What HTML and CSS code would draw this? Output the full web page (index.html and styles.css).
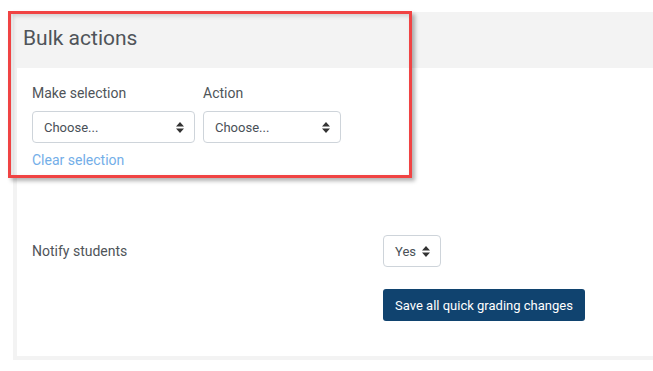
FILE: index.html
```html
<!DOCTYPE html>
<html lang="en">
<head>
    <meta charset="UTF-8">
    <title>Bulk actions</title>
    <link rel="stylesheet" href="styles.css">
</head>
<body>
    <div class="panel">
        <!-- Header band -->
        <div class="panel-header">
            <h2>Bulk actions</h2>
        </div>

        <div class="panel-body">
            <div class="bulk-row">
                <div class="field field-selection">
                    <label>Make selection</label>
                    <div class="select">
                        <span>Choose...</span>
                        <svg class="caret" width="8" height="11" viewBox="0 0 8 11"><path d="M4 0 L8 4.5 H0 Z M4 11 L8 6.5 H0 Z" fill="#333"/></svg>
                    </div>
                </div>
                <div class="field field-action">
                    <label>Action</label>
                    <div class="select">
                        <span>Choose...</span>
                        <svg class="caret" width="8" height="11" viewBox="0 0 8 11"><path d="M4 0 L8 4.5 H0 Z M4 11 L8 6.5 H0 Z" fill="#333"/></svg>
                    </div>
                </div>
            </div>
            <a class="clear-link" href="#">Clear selection</a>

            <div class="notify-row">
                <div class="notify-label">Notify students</div>
                <div class="notify-controls">
                    <div class="select select-small">
                        <span>Yes</span>
                        <svg class="caret" width="8" height="11" viewBox="0 0 8 11"><path d="M4 0 L8 4.5 H0 Z M4 11 L8 6.5 H0 Z" fill="#333"/></svg>
                    </div>
                    <button>Save all quick grading changes</button>
                </div>
            </div>
        </div>

        <!-- Annotation highlight -->
        <div class="highlight"></div>
    </div>
</body>
</html>
```

FILE: styles.css
```css
* {
    margin: 0;
    padding: 0;
    box-sizing: border-box;
}

body {
    font-family: Roboto, 'Liberation Sans', sans-serif;
    background: white;
    color: #495057;
    width: 653px;
    height: 371px;
    overflow: hidden;
}

.panel {
    position: relative;
    margin: 12px 0 0 13px;
    height: 348px;
    background: #f3f3f3;
    padding: 0 0 4px 4px;
    display: flex;
    flex-direction: column;
}

/* Header band */
.panel-header {
    height: 56px;
    margin-left: -4px;
    padding: 13px 0 0 10px;
}

h2 {
    font-size: 21px;
    font-weight: 400;
    color: #4f5459;
    line-height: 26px;
}

.panel-body {
    flex: 1;
    background: white;
    padding: 15px 0 0 15px;
}

/* Bulk selection */
.bulk-row {
    display: flex;
    gap: 8px;
}

label {
    display: block;
    font-size: 14px;
    line-height: 21px;
    margin-bottom: 7px;
    color: #4f5459;
}

.select {
    display: flex;
    align-items: center;
    justify-content: space-between;
    height: 32px;
    padding: 0 10px 0 11px;
    border: 1px solid #ced4da;
    border-radius: 4px;
    font-size: 13px;
    color: #495057;
    background: white;
}

.field-selection .select {
    width: 163px;
}

.field-action .select {
    width: 138px;
}

.clear-link {
    display: inline-block;
    margin-top: 7px;
    font-size: 14px;
    line-height: 21px;
    color: #73aee8;
    text-decoration: none;
}

/* Notify + save */
.notify-row {
    display: flex;
    margin-top: 64px;
}

.notify-label {
    width: 351px;
    font-size: 14px;
    line-height: 32px;
    color: #4f5459;
}

.notify-controls {
    display: flex;
    flex-direction: column;
    align-items: flex-start;
    gap: 22px;
}

.select-small {
    width: 58px;
    padding: 0 10px 0 11px;
    gap: 5px;
}

button {
    height: 32px;
    width: 202px;
    padding: 0;
    background: #10436f;
    color: white;
    border: none;
    border-radius: 3px;
    font-family: Roboto, 'Liberation Sans', sans-serif;
    font-size: 13px;
    font-weight: 400;
    cursor: pointer;
}

/* Red annotation box drawn over the panel */
.highlight {
    position: absolute;
    left: -5px;
    top: -1px;
    width: 404px;
    height: 167px;
    border: 3px solid #f04343;
    box-shadow: 3px 3px 4px rgba(0, 0, 0, 0.3), inset 2px 2px 4px rgba(0, 0, 0, 0.15);
}
```
